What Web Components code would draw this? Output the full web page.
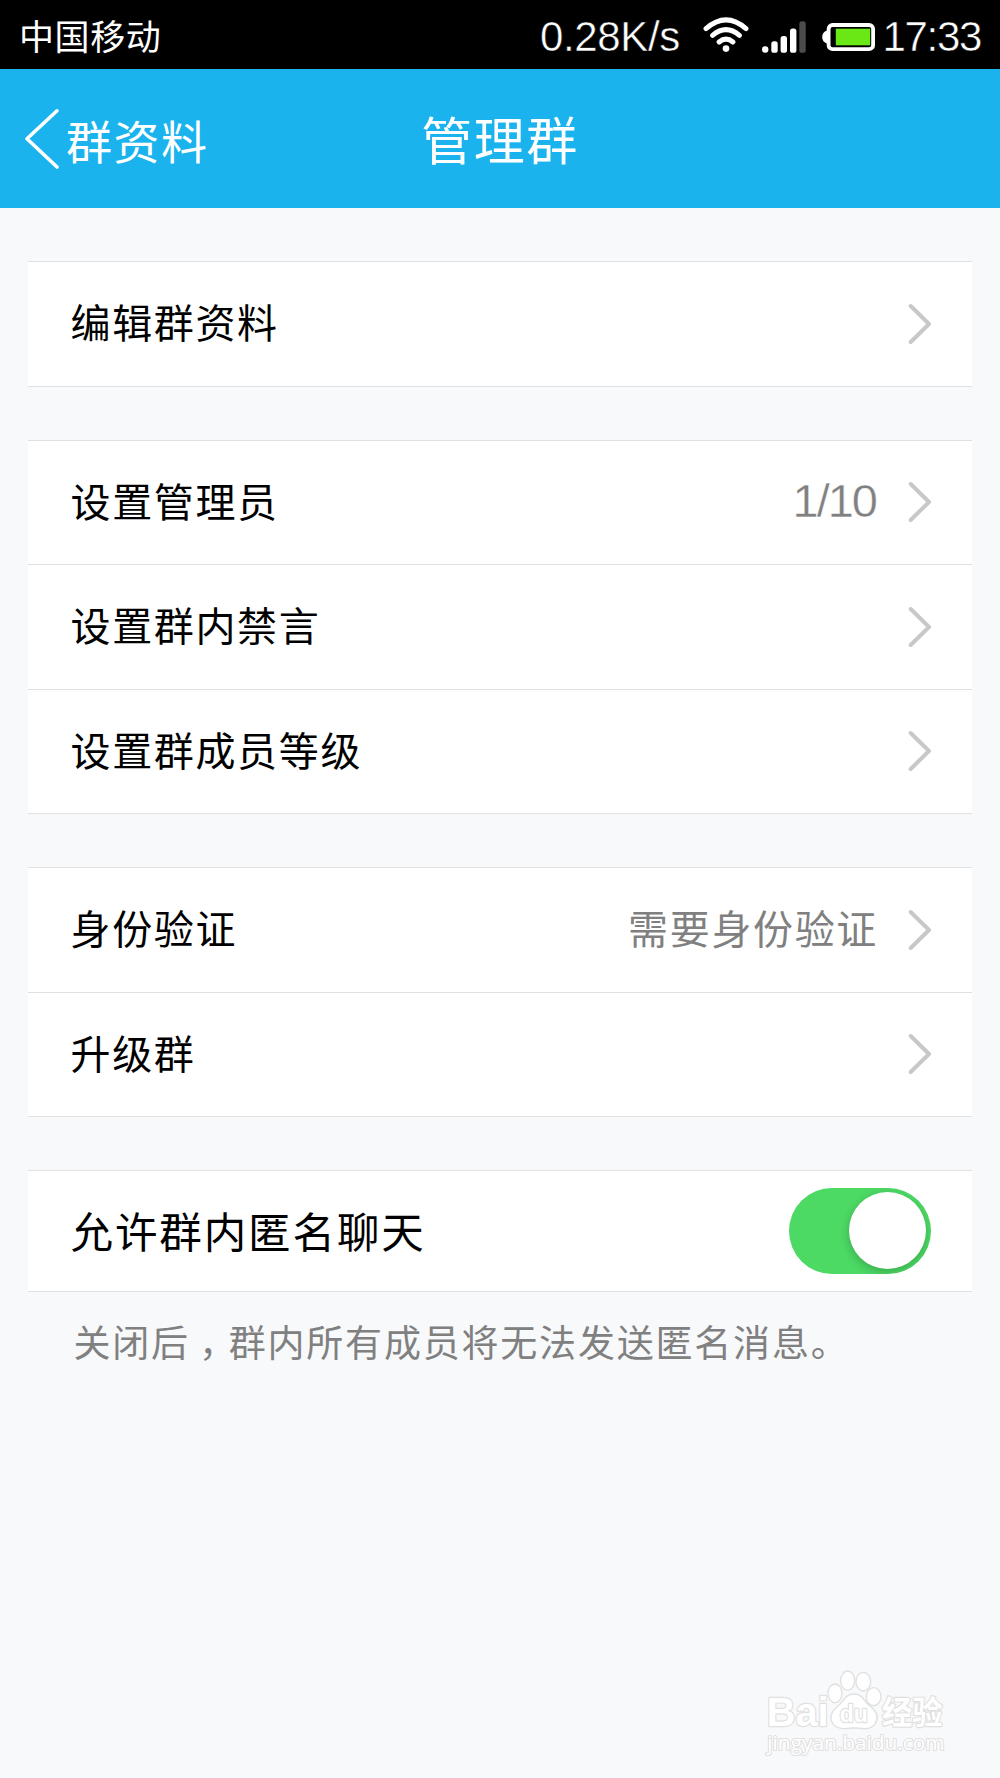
<!DOCTYPE html>
<html lang="zh-CN">
<head>
<meta charset="utf-8">
<title>管理群</title>
<style>
  body { margin: 0; }
</style>
</head>
<body>
<group-admin-page></group-admin-page>
<script>
const define = (name, html) => {
  const tpl = document.createElement('template');
  tpl.innerHTML = html;
  customElements.define(name, class extends HTMLElement {
    constructor() {
      super();
      this.attachShadow({ mode: 'open' }).append(tpl.content.cloneNode(true));
    }
  });
};

define('wifi-icon', `
<style>:host{display:block;width:46px;height:35px} svg{display:block}</style>
<svg width="46" height="35" viewBox="703 18 46 35" fill="none" stroke="#fff" stroke-width="5" stroke-linecap="round">
  <path d="M706 29.6Q726 12 746 29.6M712.6 36.3Q726 25.1 739.4 36.3M719.1 43Q726 37.4 732.9 43"/>
  <circle cx="726" cy="49.6" r="3.3" fill="#fff" stroke="none"/>
</svg>`);

define('signal-icon', `
<style>:host{display:block;width:44px;height:33px} svg{display:block}</style>
<svg width="44" height="33" viewBox="762 21 44 33" fill="#fff">
  <rect x="762" y="46.2" width="6.4" height="6.6" rx="3"/>
  <rect x="771.3" y="41.3" width="6.4" height="11.5" rx="2.6"/>
  <rect x="780.6" y="36" width="6.4" height="16.8" rx="2.6"/>
  <rect x="790" y="28.6" width="6.4" height="24.2" rx="2.6"/>
  <rect x="799.3" y="21.3" width="6.4" height="31.5" rx="2.6" fill="#4c4c4c"/>
</svg>`);

define('battery-icon', `
<style>:host{display:block;width:54px;height:30px} svg{display:block}</style>
<svg width="54" height="30" viewBox="822 22 54 30">
  <path d="M829 30.5h-2q-4.800 1.500-4.800 6.500t4.800 6.600h2z" fill="#fff"/>
  <rect x="828.600" y="25" width="44.500" height="24.200" rx="4" fill="none" stroke="#fff" stroke-width="3.800"/>
  <rect x="835.800" y="28.700" width="34.400" height="16.600" fill="#6ae815"/>
</svg>`);

define('status-bar', `
<style>
  :host{display:flex;align-items:center;box-sizing:border-box;height:69px;background:#000;color:#fff;padding:0 19px 0 19px}
  .carrier{font-size:35px;letter-spacing:.6px;line-height:50px;margin-top:0;flex:1}
  .num{font:42px/48px "Liberation Sans",sans-serif;-webkit-text-stroke:.5px #000;margin-top:5px;white-space:nowrap}
  .speed{letter-spacing:-.35px}
  .time{letter-spacing:-1.300px}
  .wifi{margin:0 13px 0 23.500px}
  .sig{margin:5px 16px 0 0}
  .bat{margin:5px 6px 0 0}
</style>
<span class="carrier">中国移动</span>
<span class="num speed">0.28K/s</span>
<wifi-icon class="wifi"></wifi-icon><signal-icon class="sig"></signal-icon><battery-icon class="bat"></battery-icon>
<span class="num time">17:33</span>`);

define('nav-bar', `
<style>
  :host{display:grid;grid-template-columns:1fr auto 1fr;align-items:center;height:139px;background:#1ab3ee;color:#fff}
  .back{display:flex;align-items:center;padding-left:24px;font-size:46px;letter-spacing:1.500px;line-height:60px}
  svg{display:block;margin-right:5px}
  .title{font-size:51px;letter-spacing:1.500px;line-height:70px;margin-top:-1px}
</style>
<div class="back">
  <svg width="37" height="62" viewBox="24 108 37 62" fill="none" stroke="#fff" stroke-width="3.600" stroke-linecap="round" stroke-linejoin="round"><path d="M57 110.800 27 138.800 57 167"/></svg>
  <slot name="back"></slot>
</div>
<div class="title"><slot></slot></div>`);

define('row-chevron', `
<style>:host{display:block;width:24px;height:42px} svg{display:block}</style>
<svg width="24" height="42" viewBox="0 0 24 42" fill="none" stroke="#c8c8c8" stroke-width="4" stroke-linecap="round" stroke-linejoin="round"><path d="M3.700 3 22 21 3.700 39"/></svg>`);

define('list-row', `
<style>
  :host{display:flex;align-items:center;height:123.500px;padding:0 41px 0 43px;font-size:40px;letter-spacing:1.650px;color:#000}
  .label{flex:1;margin-top:-5px}
  .value{color:#808080;margin:-5px 29px 0 0}
</style>
<span class="label"><slot></slot></span>
<span class="value"><slot name="value"></slot></span>
<row-chevron></row-chevron>`);

define('list-group', `
<style>
  :host{display:flex;flex-direction:column;background:#fff;border:solid #dfe1e2;border-width:1.500px 0}
  ::slotted(:not(:first-child)){border-top:1.500px solid #dfe1e2}
</style>
<slot></slot>`);

define('toggle-switch', `
<style>
  :host{display:flex;justify-content:flex-end;align-items:center;box-sizing:border-box;width:142px;height:86px;padding-right:5px;border-radius:43px;background:#4cd964;overflow:hidden}
  i{width:77px;height:77px;border-radius:50%;background:#fff;box-shadow:0 3px 10px rgba(0,0,0,.22)}
</style>
<i></i>`);

define('toggle-row', `
<style>
  :host{display:flex;align-items:center;justify-content:space-between;height:120px;padding:0 41px 0 43px;font-size:42.500px;letter-spacing:1.900px;color:#000}
  span{margin-top:-3px}
  toggle-switch{margin-top:-1px}
</style>
<span><slot></slot></span><toggle-switch></toggle-switch>`);

define('hint-text', `
<style>
  :host{display:block;padding:0 46px;font-size:37px;line-height:54px;letter-spacing:1.800px;color:#808080;white-space:nowrap}
</style>
<slot></slot>`);

define('water-mark', `
<style>:host{display:block;width:230px;height:128px} svg{display:block}</style>
<svg width="230" height="128" viewBox="0 0 690 384" fill="#fff" stroke="#dfe0e0" stroke-width="7" stroke-linejoin="round" paint-order="stroke">
  <text x="80" y="229" font-family="Liberation Sans" font-weight="700" font-size="120" textLength="186" lengthAdjust="spacingAndGlyphs">Bai</text>
  <g stroke-width="8">
    <ellipse cx="285" cy="130" rx="19" ry="26"/>
    <ellipse cx="323" cy="92" rx="19" ry="27"/>
    <ellipse cx="370" cy="95" rx="20" ry="26"/>
    <ellipse cx="401" cy="140" rx="20" ry="25"/>
    <path d="M342 134C368 134 370 156 390 171C410 186 414 204 403 221C389 240 362 232 342 232C322 232 297 240 281 221C269 204 275 187 294 171C313 156 316 134 342 134Z"/>
  </g>
  <text x="299" y="216" font-family="Liberation Sans" font-weight="700" font-size="74" textLength="84" lengthAdjust="spacingAndGlyphs">du</text>
  <text x="426" y="223" font-family="Noto Sans CJK SC" font-weight="700" font-size="94" textLength="182" lengthAdjust="spacingAndGlyphs">经验</text>
  <text x="82" y="300" font-family="Open Sans" font-size="58" stroke-width="6" textLength="532" lengthAdjust="spacingAndGlyphs">jingyan.baidu.com</text>
</svg>`);

define('group-admin-page', `
<style>
  :host{display:block;position:relative;box-sizing:border-box;width:1000px;height:1778px;overflow:hidden;background:#f8f9fb;font-family:"Noto Sans CJK SC",sans-serif}
  main{display:flex;flex-direction:column;gap:53px;padding:53px 28px 0 27.500px}
  [slot=value].num{display:block;margin-top:3px;font:47px/60px "Liberation Sans",sans-serif;letter-spacing:-2px;margin-right:2px;-webkit-text-stroke:.4px #fff}
  .comma{margin:0 -9px 0 9px}
  section{display:flex;flex-direction:column;gap:22px}
  water-mark{position:absolute;left:740px;top:1650px}
</style>
<status-bar></status-bar>
<nav-bar><span slot="back">群资料</span>管理群</nav-bar>
<main>
  <list-group><list-row>编辑群资料</list-row></list-group>
  <list-group>
    <list-row>设置管理员<span slot="value" class="num">1/10</span></list-row>
    <list-row>设置群内禁言</list-row>
    <list-row>设置群成员等级</list-row>
  </list-group>
  <list-group>
    <list-row>身份验证<span slot="value">需要身份验证</span></list-row>
    <list-row>升级群</list-row>
  </list-group>
  <section>
    <list-group><toggle-row>允许群内匿名聊天</toggle-row></list-group>
    <hint-text>关闭后<span class="comma">，</span>群内所有成员将无法发送匿名消息。</hint-text>
  </section>
</main>
<water-mark></water-mark>`);
</script>
</body>
</html>
